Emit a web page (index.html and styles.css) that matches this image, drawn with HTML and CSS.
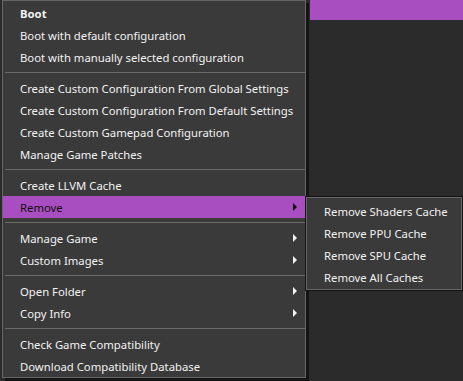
FILE: index.html
```html
<!DOCTYPE html>
<html>
<head>
<meta charset="utf-8">
<link rel="stylesheet" href="styles.css">
</head>
<body>
<div class="page">
  <div class="topbar"></div>
</div>
<div class="menu main-menu">
  <div class="item bold">Boot</div>
  <div class="item">Boot with default configuration</div>
  <div class="item">Boot with manually selected configuration</div>
  <div class="sep"></div>
  <div class="item">Create Custom Configuration From Global Settings</div>
  <div class="item">Create Custom Configuration From Default Settings</div>
  <div class="item">Create Custom Gamepad Configuration</div>
  <div class="item">Manage Game Patches</div>
  <div class="sep"></div>
  <div class="item">Create LLVM Cache</div>
  <div class="item active sub">Remove<span class="arrow"></span></div>
  <div class="sep"></div>
  <div class="item sub">Manage Game<span class="arrow"></span></div>
  <div class="item sub">Custom Images<span class="arrow"></span></div>
  <div class="sep"></div>
  <div class="item sub">Open Folder<span class="arrow"></span></div>
  <div class="item sub">Copy Info<span class="arrow"></span></div>
  <div class="sep"></div>
  <div class="item">Check Game Compatibility</div>
  <div class="item">Download Compatibility Database</div>
</div>
<div class="menu sub-menu">
  <div class="item">Remove Shaders Cache</div>
  <div class="item">Remove PPU Cache</div>
  <div class="item">Remove SPU Cache</div>
  <div class="item">Remove All Caches</div>
</div>
</body>
</html>
```
FILE: styles.css
```css
html, body {
  margin: 0;
  padding: 0;
  background: #2b2b2b;
  width: 463px;
  height: 381px;
  overflow: hidden;
  font-family: "Noto Sans", "Open Sans", sans-serif;
  font-size: 11.3px;
  color: #f2f2f2;
}
.page {
  display: flex;
  flex-direction: column;
}
.topbar {
  margin-left: 310px;
  height: 20px;
  background: #a84ec0;
}
.menu {
  position: absolute;
  box-sizing: border-box;
  background: #3a3a3a;
  border: 1px solid #666666;
}
.main-menu {
  left: 2px;
  top: 0;
  width: 304px;
  height: 378px;
  padding-top: 1px;
  box-shadow: 3px 3px 0 0 #141414;
}
.sub-menu {
  left: 306px;
  top: 197px;
  width: 156px;
  height: 93px;
  padding-top: 2px;
  box-shadow: 0 0 0 1px #141414;
}
.item {
  height: 22px;
  line-height: 24px;
  padding-left: 17px;
  white-space: nowrap;
  position: relative;
  overflow: hidden;
}
.bold {
  font-weight: bold;
}
.active {
  background: #a84ec0;
  color: #111111;
}
.sep {
  height: 9px;
  display: flex;
  flex-direction: column;
  justify-content: center;
  padding-left: 2px;
}
.sep::before {
  content: "";
  display: block;
  height: 1px;
  background: #6a6a6a;
}
.arrow {
  position: absolute;
  left: 290px;
  top: 7px;
  width: 0;
  height: 0;
  border-left: 4px solid #f2f2f2;
  border-top: 4px solid transparent;
  border-bottom: 4px solid transparent;
}
.active .arrow {
  border-left-color: #111111;
}
```
